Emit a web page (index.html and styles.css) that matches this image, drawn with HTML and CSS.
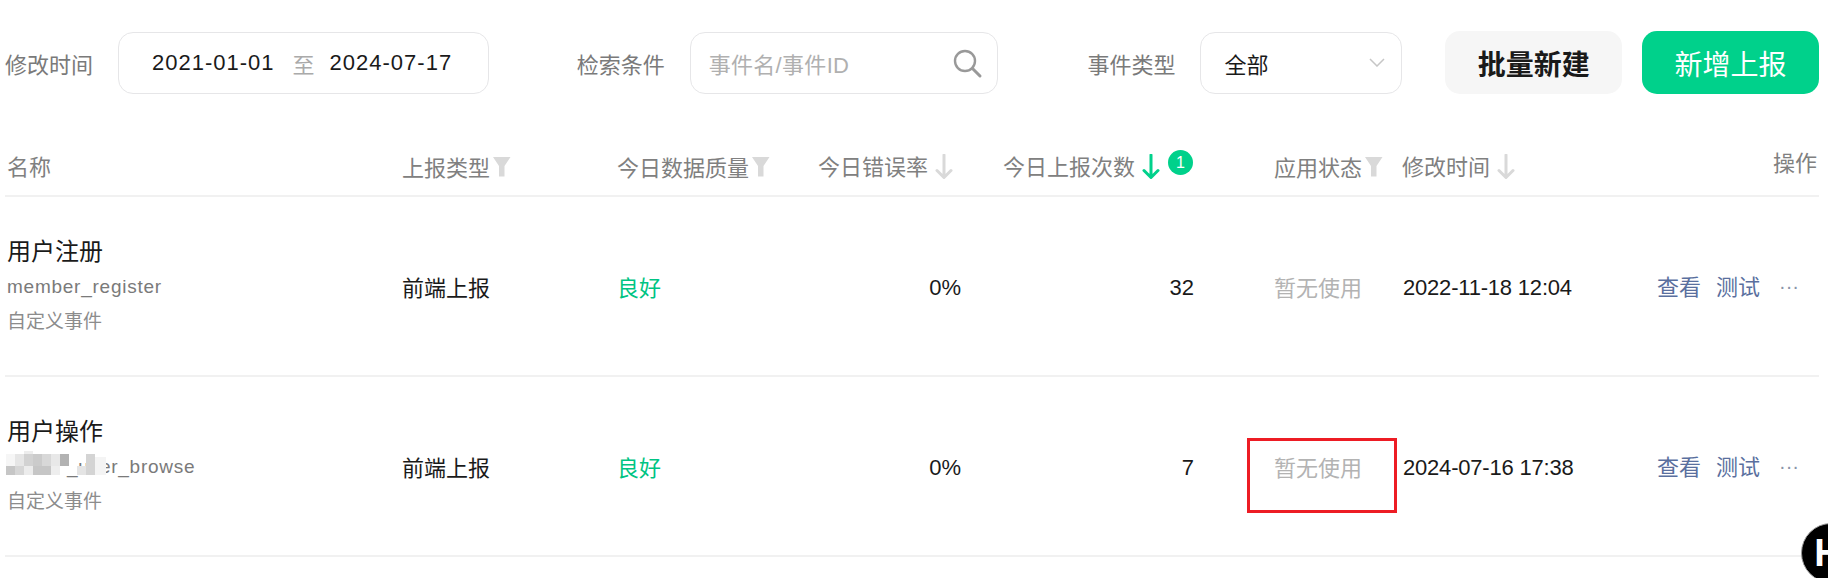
FILE: index.html
```html
<!DOCTYPE html>
<html lang="zh-CN">
<head>
    <meta charset="UTF-8">
    <meta name="viewport" content="width=device-width, initial-scale=1.0">
    <title>事件管理</title>
    <link rel="stylesheet" href="styles.css">
</head>
<body>
    <svg class="icon-defs" width="0" height="0">
        <symbol id="icon-funnel" viewBox="0 0 18 20"><path d="M0 0H17.5L11.5 9V19.5H6V9Z"/></symbol>
        <symbol id="icon-arrow" viewBox="0 0 18 26"><path d="M9 1V23M2 16.5L9 23.5L16 16.5" fill="none" stroke="currentColor" stroke-width="3" stroke-linecap="round" stroke-linejoin="round"/></symbol>
    </svg>

    <div class="page">
        <div class="toolbar">
            <span class="field-label">修改时间</span>
            <div class="date-range">
                <span>2021-01-01</span>
                <span class="date-sep">至</span>
                <span>2024-07-17</span>
            </div>
            <span class="field-label label-search">检索条件</span>
            <div class="search-box">
                <span class="placeholder">事件名/事件ID</span>
                <svg class="search-icon" width="30" height="30" viewBox="0 0 30 30">
                    <circle cx="12" cy="12" r="10" fill="none" stroke="#999" stroke-width="2.4"/>
                    <path d="M19.5 19.5L27 27" stroke="#999" stroke-width="3" stroke-linecap="round"/>
                </svg>
            </div>
            <span class="field-label label-type">事件类型</span>
            <div class="select-box">
                <span>全部</span>
                <svg width="16" height="9" viewBox="0 0 16 9"><path d="M1 1L8 8L15 1" fill="none" stroke="#c6c6c6" stroke-width="1.5"/></svg>
            </div>
            <button class="btn btn-batch">批量新建</button>
            <button class="btn btn-add">新增上报</button>
        </div>

        <div class="table">
            <div class="table-head">
                <div class="th">名称</div>
                <div class="th th-filter">上报类型<svg class="funnel"><use href="#icon-funnel"/></svg></div>
                <div class="th th-filter">今日数据质量<svg class="funnel"><use href="#icon-funnel"/></svg></div>
                <div class="th">今日错误率<svg class="sort"><use href="#icon-arrow"/></svg></div>
                <div class="th">今日上报次数<svg class="sort sort-active"><use href="#icon-arrow"/></svg><span class="badge">1</span></div>
                <div class="th th-filter">应用状态<svg class="funnel"><use href="#icon-funnel"/></svg></div>
                <div class="th">修改时间<svg class="sort"><use href="#icon-arrow"/></svg></div>
                <div class="th th-action">操作</div>
            </div>

            <div class="table-row">
                <div class="cell-name">
                    <div class="event-name">用户注册</div>
                    <div class="event-id">member_register</div>
                    <div class="event-kind">自定义事件</div>
                </div>
                <div class="cell">前端上报</div>
                <div class="cell cell-good">良好</div>
                <div class="cell cell-rate">0%</div>
                <div class="cell cell-count">32</div>
                <div class="cell cell-muted">暂无使用</div>
                <div class="cell cell-date">2022-11-18 12:04</div>
                <div class="cell cell-actions"><a>查看</a><a>测试</a><span class="more">···</span></div>
            </div>

            <div class="table-row">
                <div class="cell-name">
                    <div class="event-name">用户操作</div>
                    <div class="event-id event-id-masked">
                        _user_browse
                        <svg class="mosaic" width="101" height="27" viewBox="0 0 101 27">
                            <rect x="18" y="0" width="9" height="3" fill="#ededed"/>
                            <rect x="0" y="3" width="9" height="12" fill="#f6f6f6"/>
                            <rect x="9" y="3" width="9" height="12" fill="#e6e6e6"/>
                            <rect x="18" y="3" width="9" height="12" fill="#d2d2d2"/>
                            <rect x="27" y="3" width="9" height="12" fill="#cbcbcb"/>
                            <rect x="36" y="3" width="9" height="12" fill="#d8d8d8"/>
                            <rect x="45" y="3" width="9" height="12" fill="#e8e8e8"/>
                            <rect x="54" y="3" width="9" height="12" fill="#b2b2b2"/>
                            <rect x="0" y="15" width="9" height="9" fill="#c6c6c6"/>
                            <rect x="9" y="15" width="9" height="9" fill="#d6d6d6"/>
                            <rect x="18" y="15" width="9" height="9" fill="#ececec"/>
                            <rect x="27" y="15" width="18" height="9" fill="#c6c6c6"/>
                            <rect x="45" y="15" width="9" height="9" fill="#eeeeee"/>
                            <rect x="80" y="3" width="9" height="12" fill="#d4d4d4"/>
                            <rect x="71" y="15" width="18" height="9" fill="#e4e4e4"/>
                            <rect x="80" y="15" width="9" height="9" fill="#d4d4d4"/>
                            <rect x="89" y="6" width="11" height="18" fill="#f4f4f4"/>
                        </svg>
                    </div>
                    <div class="event-kind">自定义事件</div>
                </div>
                <div class="cell">前端上报</div>
                <div class="cell cell-good">良好</div>
                <div class="cell cell-rate">0%</div>
                <div class="cell cell-count">7</div>
                <div class="cell cell-muted">暂无使用<span class="red-box"></span></div>
                <div class="cell cell-date">2024-07-16 17:38</div>
                <div class="cell cell-actions"><a>查看</a><a>测试</a><span class="more">···</span></div>
            </div>
        </div>
    </div>

    <div class="help-fab">H</div>
</body>
</html>
```

FILE: styles.css
```css
* {
    margin: 0;
    padding: 0;
    box-sizing: border-box;
}

html, body {
    height: 100%;
    overflow: hidden;
}

body {
    font-family: "Liberation Sans", "Noto Sans CJK SC", sans-serif;
    font-size: 22px;
    color: #1a1a1a;
    background: #fff;
    position: relative;
}

.icon-defs {
    position: absolute;
}

.page {
    padding: 31px 9px 0 5px;
}

/* toolbar */
.toolbar {
    display: flex;
    align-items: center;
    height: 63px;
}

.field-label {
    color: #7a7a7a;
    margin-right: 25px;
    white-space: nowrap;
}

.label-search {
    margin-left: 88px;
    margin-right: 25px;
}

.label-type {
    margin-left: 89px;
}

.date-range, .search-box, .select-box {
    display: flex;
    align-items: center;
    height: 62px;
    border: 1px solid #e6e6e8;
    border-radius: 15px;
}

.date-range {
    width: 371px;
    padding-left: 33px;
    letter-spacing: 1px;
}

.date-sep {
    color: #aaa;
    margin: 0 14px 0 18px;
}

.search-box {
    width: 309px;
    padding: 0 14px 0 18px;
    justify-content: space-between;
}

.search-icon {
    margin-top: 2px;
}

.placeholder {
    color: #b0b0b0;
    letter-spacing: 0.3px;
}

.select-box {
    width: 202px;
    padding: 0 16px 0 23px;
    justify-content: space-between;
}

.btn {
    height: 63px;
    border: none;
    border-radius: 15px;
    font-family: inherit;
    font-size: 28px;
    cursor: pointer;
}

.btn-batch {
    width: 177px;
    margin-left: 43px;
    background: #f6f6f6;
    color: #1a1a1a;
    font-weight: 700;
}

.btn-add {
    width: 177px;
    margin-left: 20px;
    background: #00d18b;
    color: #fff;
}

/* table */
.table-head, .table-row {
    display: grid;
    grid-template-columns: 397px 215px 201px 185px 271px 128px 248px 169px;
}

.table-head {
    grid-template-rows: 44px;
    margin-top: 53px;
    height: 50px;
    padding-bottom: 4px;
    border-bottom: 2px solid #f1f1f1;
}

.table-row {
    height: 180px;
    border-bottom: 2px solid #f1f1f1;
}

.th {
    display: flex;
    align-items: center;
    padding-bottom: 9px;
    color: #808080;
    white-space: nowrap;
}

.th:first-child {
    padding-left: 2px;
}

.th-filter {
    padding-bottom: 6px;
}

.th-action {
    justify-content: flex-end;
    padding-bottom: 16px;
    padding-right: 2px;
}

.funnel {
    width: 18px;
    height: 20px;
    margin-left: 3px;
    margin-bottom: -1px;
    fill: #d9d9d9;
}

.sort {
    width: 18px;
    height: 26px;
    margin-left: 7px;
    margin-top: 5px;
    color: #d9d9d9;
}

.sort-active {
    color: #00d18b;
}

.badge {
    display: flex;
    align-items: center;
    justify-content: center;
    width: 25px;
    height: 25px;
    margin-left: 8px;
    margin-bottom: 4px;
    border-radius: 50%;
    background: #00d18b;
    color: #fff;
    font-size: 16px;
}

.cell-name {
    padding: 37px 0 0 2px;
    line-height: 35px;
}

.event-name {
    font-size: 24px;
}

.event-id {
    position: relative;
    font-size: 19px;
    letter-spacing: 0.75px;
    color: #7a7a7a;
}

.event-id-masked {
    padding-left: 60px;
}

.mosaic {
    position: absolute;
    left: -1px;
    top: 2px;
}

.event-kind {
    font-size: 19px;
    color: #8c8c8c;
}

.cell {
    display: flex;
    align-items: center;
    padding-bottom: 1px;
    position: relative;
    white-space: nowrap;
}

.cell-good {
    color: #00c483;
}

.cell-rate {
    justify-content: flex-end;
    padding-top: 3px;
    padding-bottom: 0;
    padding-right: 42px;
}

.cell-count {
    justify-content: flex-end;
    padding-top: 3px;
    padding-bottom: 0;
    padding-right: 80px;
}

.cell-muted {
    color: #b3b3b3;
}

.cell-date {
    padding-top: 3px;
    padding-bottom: 0;
    padding-left: 1px;
    letter-spacing: -0.2px;
}

.cell-actions {
    color: #5a6f9e;
    margin-left: 7px;
    padding-bottom: 3px;
    gap: 15px;
}

.more {
    color: #8a94a8;
    font-size: 20px;
    margin-left: 4px;
    margin-top: 3px;
}

/* annotation box around the status cell */
.red-box {
    position: absolute;
    left: -27px;
    top: 61px;
    width: 150px;
    height: 75px;
    border: 3px solid #ed1c24;
}

.help-fab {
    position: absolute;
    left: 1801px;
    top: 523px;
    width: 60px;
    height: 60px;
    padding-right: 6px;
    border-radius: 50%;
    background: #000;
    border: 1px solid #999;
    color: #fff;
    font-size: 38px;
    font-weight: 700;
    line-height: 58px;
    text-align: center;
}
```
